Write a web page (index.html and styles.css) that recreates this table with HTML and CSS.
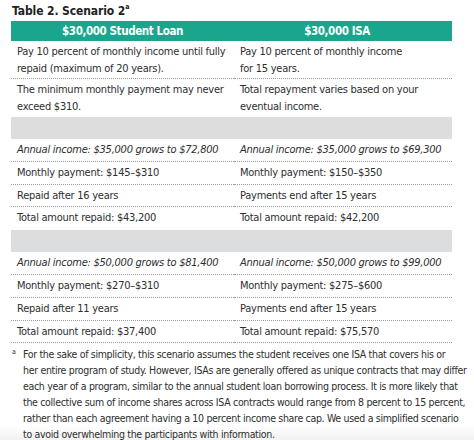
FILE: index.html
```html
<!DOCTYPE html>
<html>
<head>
<meta charset="utf-8">
<link rel="stylesheet" href="styles.css">
</head>
<body>
<div class="page">
  <div class="title">Table 2. Scenario 2<sup>a</sup></div>
  <div class="table">
    <div class="head">$30,000 Student Loan</div>
    <div class="head right">$30,000 ISA</div>

    <div class="cell tall dot">Pay 10 percent of monthly income until fully<br>repaid (maximum of 20 years).</div>
    <div class="cell tall dot">Pay 10 percent of monthly income<br>for 15 years.</div>
    <div class="cell tall">The minimum monthly payment may never<br>exceed $310.</div>
    <div class="cell tall">Total repayment varies based on your<br>eventual income.</div>

    <div class="band"></div>

    <div class="cell dot it">Annual income: $35,000 grows to $72,800</div>
    <div class="cell dot it">Annual income: $35,000 grows to $69,300</div>
    <div class="cell dot">Monthly payment: $145–$310</div>
    <div class="cell dot">Monthly payment: $150–$350</div>
    <div class="cell dot">Repaid after 16 years</div>
    <div class="cell dot">Payments end after 15 years</div>
    <div class="cell">Total amount repaid: $43,200</div>
    <div class="cell">Total amount repaid: $42,200</div>

    <div class="band"></div>

    <div class="cell dot it">Annual income: $50,000 grows to $81,400</div>
    <div class="cell dot it">Annual income: $50,000 grows to $99,000</div>
    <div class="cell dot">Monthly payment: $270–$310</div>
    <div class="cell dot">Monthly payment: $275–$600</div>
    <div class="cell dot">Repaid after 11 years</div>
    <div class="cell dot">Payments end after 15 years</div>
    <div class="cell dot">Total amount repaid: $37,400</div>
    <div class="cell dot">Total amount repaid: $75,570</div>
  </div>
  <div class="note">
    <span class="mark">a</span>
    <span class="note-text">For the sake of simplicity, this scenario assumes the student receives one ISA that covers his or<br>her entire program of study. However, ISAs are generally offered as unique contracts that may differ<br>each year of a program, similar to the annual student loan borrowing process. It is more likely that<br>the collective sum of income shares across ISA contracts would range from 8 percent to 15 percent,<br>rather than each agreement having a 10 percent income share cap. We used a simplified scenario<br>to avoid overwhelming the participants with information.</span>
  </div>
</div>
</body>
</html>
```

FILE: styles.css
```css
html, body {
  margin: 0;
  padding: 0;
  background: #ffffff;
}
body {
  font-family: "DejaVu Sans", sans-serif;
  font-stretch: condensed;
  color: #2e2e2e;
  width: 474px;
  height: 440px;
  overflow: hidden;
  background: linear-gradient(to bottom, #ffffff 0, #ffffff 425px, #f2f2f2 440px);
}
.page {
  padding: 2px 22px 0 11px;
}
.title {
  font-weight: bold;
  font-size: 12px;
  line-height: 19px;
  color: #222;
  padding-left: 1px;
  letter-spacing: -0.1px;
}
.title sup {
  font-size: 7px;
  vertical-align: top;
  line-height: 10px;
}
.table {
  display: grid;
  grid-template-columns: 223px 218px;
}
.head {
  background: #19a68d;
  color: #ffffff;
  font-weight: bold;
  font-size: 11.5px;
  letter-spacing: -0.4px;
  line-height: 20px;
  text-align: center;
}
.head.right {
  padding-right: 12px;
}
.cell {
  font-size: 11px;
  letter-spacing: -0.25px;
  line-height: 16.8px;
  padding: 3px 6px 2px 6px;
  border-bottom: 1px solid transparent;
  white-space: nowrap;
}
.cell.tall {
  line-height: 17px;
  padding: 2px 6px 1px 6px;
}
.dot {
  border-bottom: 1px dotted #9d9d9d;
}
.it {
  font-style: italic;
}
.band {
  grid-column: 1 / -1;
  height: 22px;
  background: #dcdddf;
}
.note {
  display: flex;
  padding-top: 3px;
  font-size: 10.5px;
  letter-spacing: -0.32px;
  line-height: 16px;
  color: #2e2e2e;
}
.mark {
  width: 11px;
  flex: none;
  font-size: 7px;
  line-height: 12px;
  padding-left: 1px;
}
.note-text {
  white-space: nowrap;
}
```
